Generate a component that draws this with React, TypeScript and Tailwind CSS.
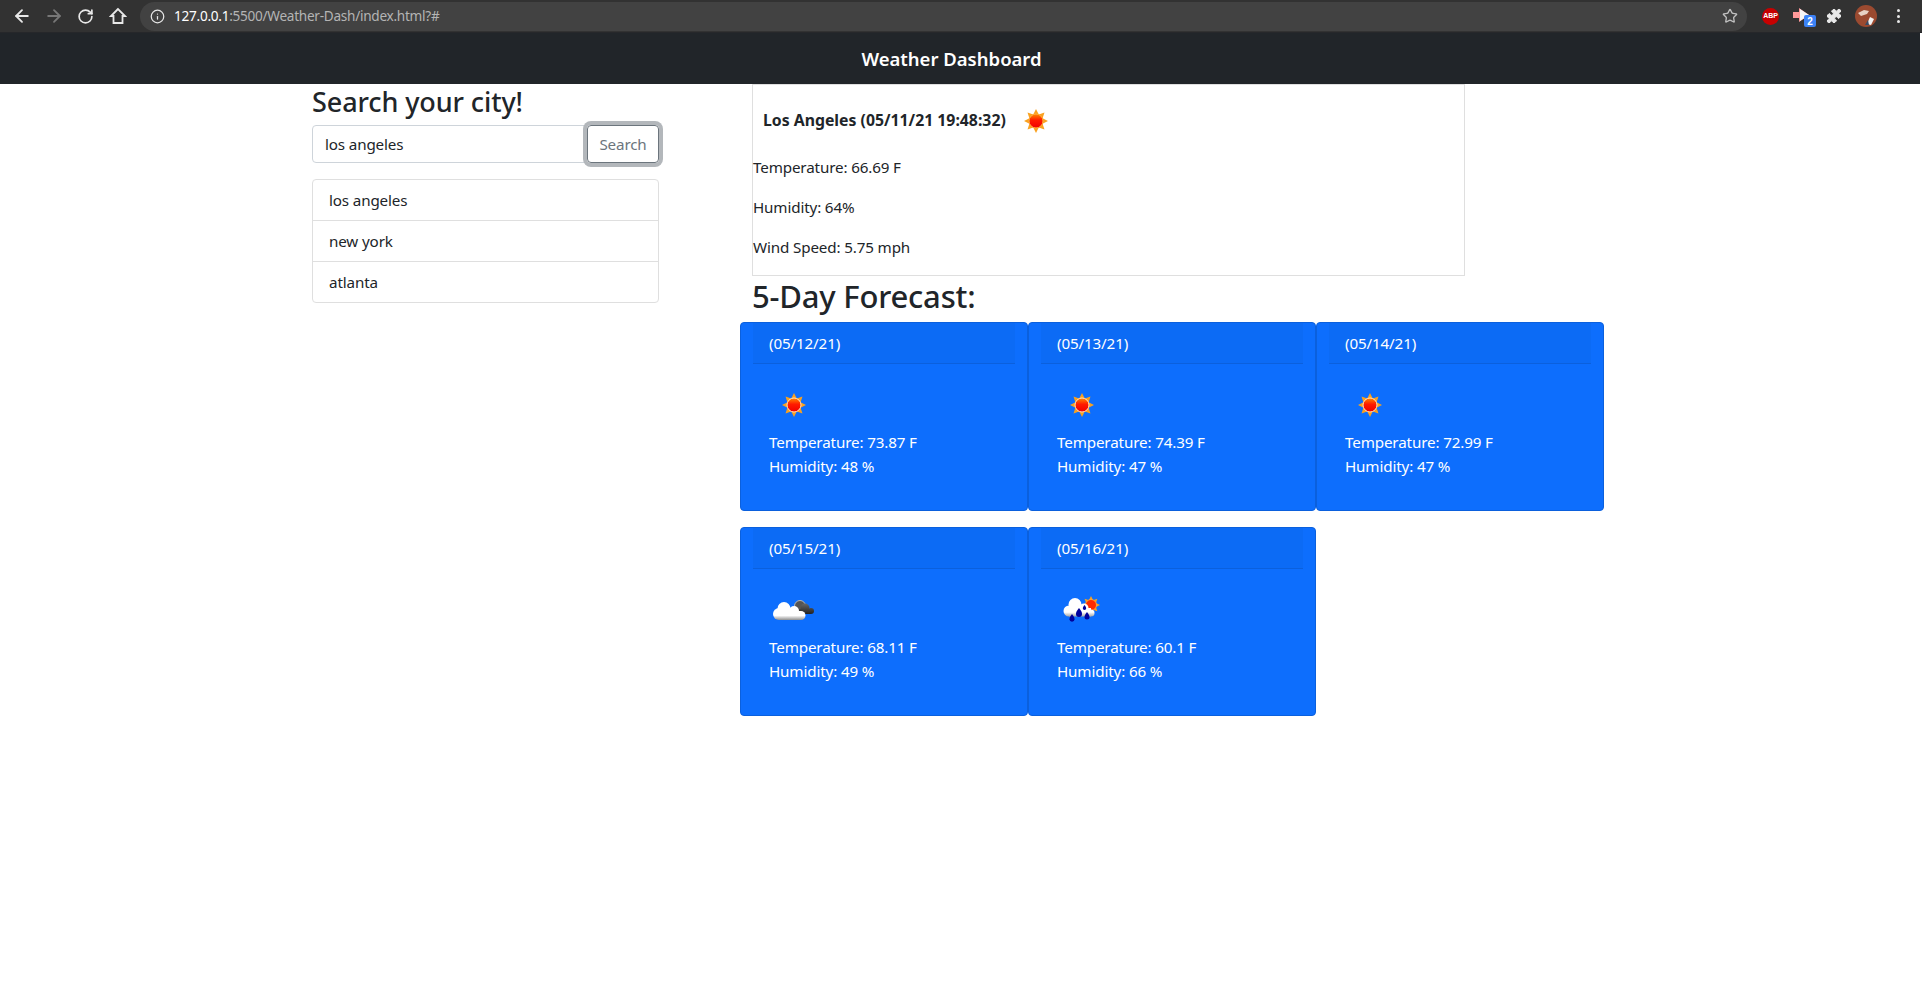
import { ArrowLeft, ArrowRight, RotateCw, Info, Star, Puzzle } from 'lucide-react';

interface Forecast {
  date: string;
  temp: string;
  humidity: number;
  icon: 'sun' | 'cloud' | 'rain';
}

const forecasts: Forecast[] = [
  { date: '(05/12/21)', temp: '73.87', humidity: 48, icon: 'sun' },
  { date: '(05/13/21)', temp: '74.39', humidity: 47, icon: 'sun' },
  { date: '(05/14/21)', temp: '72.99', humidity: 47, icon: 'sun' },
  { date: '(05/15/21)', temp: '68.11', humidity: 49, icon: 'cloud' },
  { date: '(05/16/21)', temp: '60.1', humidity: 66, icon: 'rain' },
];

const cities = ['los angeles', 'new york', 'atlanta'];
const rays = [0, 45, 90, 135, 180, 225, 270, 315];

const SunIcon = ({ ring = false }: { ring?: boolean }) => (
  <svg width="24" height="24" viewBox="0 0 24 24">
    <defs>
      <linearGradient id="sunFill" x1="0" y1="0" x2="0" y2="1">
        <stop offset="0" stopColor="#ff8a00" />
        <stop offset="0.45" stopColor="#ff1a00" />
        <stop offset="1" stopColor="#f00000" />
      </linearGradient>
    </defs>
    {rays.map((r) => (
      <path key={r} d="M12 0l3 6H9z" fill="#f9a11f" transform={`rotate(${r} 12 12)`} />
    ))}
    <circle cx="12" cy="12" r="7" fill="url(#sunFill)" stroke={ring ? '#ffe3c4' : '#ffb040'} strokeWidth="1" />
  </svg>
);

const CloudIcon = () => (
  <svg width="44" height="22" viewBox="0 0 44 22">
    <defs>
      <linearGradient id="darkCloud" gradientUnits="userSpaceOnUse" x1="0" y1="2" x2="0" y2="15">
        <stop offset="0" stopColor="#777" />
        <stop offset="1" stopColor="#222" />
      </linearGradient>
      <linearGradient id="whiteCloud" gradientUnits="userSpaceOnUse" x1="0" y1="3" x2="0" y2="21">
        <stop offset="0" stopColor="#fff" />
        <stop offset="0.75" stopColor="#fff" />
        <stop offset="1" stopColor="#8f8f8f" />
      </linearGradient>
    </defs>
    <circle cx="28" cy="7" r="5.500" fill="#555" stroke="#b5b5b5" strokeWidth="1" />
    <g fill="url(#darkCloud)">
      <circle cx="33" cy="9" r="4.500" />
      <circle cx="39" cy="12" r="3" />
      <rect x="27" y="10" width="12" height="5" />
    </g>
    <g fill="url(#whiteCloud)">
      <circle cx="7" cy="15" r="6" />
      <circle cx="12" cy="9.500" r="6.500" />
      <circle cx="22" cy="12" r="5" />
      <circle cx="29" cy="16.500" r="4.500" />
      <rect x="7" y="12" width="22" height="9" />
    </g>
  </svg>
);

const RainIcon = () => (
  <svg width="38" height="28" viewBox="0 0 38 28">
    <defs>
      <linearGradient id="rainCloud" gradientUnits="userSpaceOnUse" x1="0" y1="2" x2="0" y2="21">
        <stop offset="0" stopColor="#fff" />
        <stop offset="0.75" stopColor="#fff" />
        <stop offset="1" stopColor="#9a9a9a" />
      </linearGradient>
    </defs>
    {rays.map((r) => (
      <path key={r} d="M28 0l2.500 5h-5z" fill="#f9a11f" transform={`rotate(${r} 28 9)`} />
    ))}
    <circle cx="28" cy="9" r="5.500" fill="#ff2a00" stroke="#ffb040" strokeWidth="0.800" />
    <g fill="url(#rainCloud)">
      <circle cx="6" cy="15" r="5.500" />
      <circle cx="12" cy="8.500" r="6.500" />
      <circle cx="21" cy="12" r="4.500" />
      <circle cx="28" cy="17" r="3.500" />
      <rect x="6" y="12" width="22" height="8.500" />
    </g>
    <path d="M9 18c2 2.500 2.500 4 2.500 5.200a2.500 2.500 0 0 1-5 0c0-1.200.5-2.700 2.500-5.200z" fill="#00009c" />
    <path d="M16 12c2.500 3 3 4.500 3 6a3 3 0 0 1-6 0c0-1.500.5-3 3-6z" fill="#00009c" />
    <path d="M24 16c2 2.500 2.500 4 2.500 5a2.500 2.500 0 0 1-5 0c0-1 .5-2.500 2.500-5z" fill="#00009c" />
    <path d="M21.500 9c1.200 1.500 1.700 2.500 1.700 3.300a1.700 1.700 0 0 1-3.400 0c0-.8.5-1.800 1.700-3.300z" fill="#00009c" />
  </svg>
);

const ForecastCard = ({ date, temp, humidity, icon }: Forecast) => (
  <div className="h-[189px] w-[288px] rounded-[4px] border border-[#0b60dd] bg-[#0d6efd] text-white">
    <div className="mx-3 h-[41px] border-b border-[#0b60dd] bg-[#0c6bf5] pl-4 pt-[9px]">{date}</div>
    <div className="pl-7 pt-[21px]">
      <div className="flex h-[40px] w-[50px] items-center justify-center">
        {icon === 'sun' && <SunIcon ring />}
        {icon === 'cloud' && <CloudIcon />}
        {icon === 'rain' && <RainIcon />}
      </div>
      <p className="mt-[5px] leading-6">Temperature: {temp} F</p>
      <p className="leading-6">Humidity: {humidity} %</p>
    </div>
  </div>
);

const BrowserBar = () => (
  <div className="flex h-[33px] items-center border-b border-[#26272a] bg-[#323232] text-white">
    <div className="flex w-[140px] items-center gap-[12px] pl-[12px]">
      <ArrowLeft size={20} strokeWidth={2.2} className="text-[#e8e8e8]" />
      <ArrowRight size={20} strokeWidth={2.2} className="text-[#777]" />
      <RotateCw size={17} strokeWidth={2.4} className="ml-[1px] text-[#e8e8e8]" />
      <svg width="18" height="18" viewBox="0 0 18 18" className="ml-[3px]">
        <path d="M9 2L2 9h2.500v7h9V9H16z" fill="none" stroke="#e8e8e8" strokeWidth="1.800" />
      </svg>
    </div>
    <div className="flex h-[29px] w-[1607px] items-center rounded-full bg-[#424242] pl-[10px]">
      <Info size={15} strokeWidth={2} className="text-[#e8e8e8]" />
      <span className="ml-[9px] text-[13.600px] tracking-[-0.27px]">
        <span className="text-white">127.0.0.1</span>
        <span className="text-[#b4b4b4]">:5500/Weather-Dash/index.html?#</span>
      </span>
      <Star size={16} strokeWidth={2} className="ml-auto mr-[9px] text-[#c0c0c0]" />
    </div>
    <div className="flex flex-1 items-center pl-[15px]">
      <div className="flex h-[17px] w-[17px] items-center justify-center rounded-full bg-[#c70000] font-['Liberation_Sans',sans-serif] text-[7px] font-bold text-white">
        ABP
      </div>
      <div className="relative ml-[14px] h-[18px] w-[20px]">
        <svg width="18" height="14" viewBox="0 0 18 14" className="mt-[1px]">
          <path d="M0 4h6V0l10 7-10 7v-4H0z" fill="#ff9a9a" />
          <path d="M7 1l9 6-9 6z" fill="#f5f5f5" />
        </svg>
        <span className="absolute right-[-3px] top-[8px] flex h-[12px] w-[12px] items-center justify-center rounded-[2px] bg-[#3b82f6] font-['Liberation_Sans',sans-serif] text-[10px] font-bold text-white">
          2
        </span>
      </div>
      <Puzzle size={16} fill="#e8e8e8" strokeWidth={1.5} className="ml-[13px] text-[#e8e8e8]" />
      <svg width="22" height="22" viewBox="0 0 22 22" className="ml-[13px]">
        <circle cx="11" cy="11" r="11" fill="#9b4a30" />
        <path d="M3 8l6-3 5 1-2 3-6 2z" fill="#e8d2c4" />
        <path d="M12 19l3-7 4 2-3 6z" fill="#f3f3f3" />
        <path d="M10 20l3-5 1 5z" fill="#394b63" />
      </svg>
      <div className="ml-[20px] flex flex-col gap-[2.500px]">
        <span className="h-[3px] w-[3px] rounded-full bg-[#e8e8e8]" />
        <span className="h-[3px] w-[3px] rounded-full bg-[#e8e8e8]" />
        <span className="h-[3px] w-[3px] rounded-full bg-[#e8e8e8]" />
      </div>
    </div>
  </div>
);

export default function App() {
  return (
    <div className="min-h-[996px] bg-white font-['Noto_Sans',sans-serif] text-[15.200px] tracking-[-0.14px] text-[#212529]">
      <BrowserBar />
      <nav className="flex h-[51px] w-[1920px] items-center justify-center bg-[#212529] pr-[17px] pt-[1px] text-[18.500px] font-semibold tracking-normal text-white">
        Weather Dashboard
      </nav>
      <main className="flex pl-[312px]">
        <section className="w-[347px]">
          <h2 className="text-[27px] font-medium leading-[36px] tracking-[-0.1px]">Search your city!</h2>
          <div className="mt-[5px] flex">
            <input
              readOnly
              value="los angeles"
              className="h-[38px] w-[275px] rounded-l-[4px] border border-[#ced4da] px-3 text-[#212529] outline-none"
            />
            <button className="z-10 h-[38px] w-[72px] rounded-[4px] border border-[#6c757d] text-[#6c757d] ring-4 ring-[#b3b7bb]">
              Search
            </button>
          </div>
          <ul className="mt-4 rounded-[4px] border border-[#dfdfdf]">
            {cities.map((city, i) => (
              <li
                key={city}
                className={i > 0 ? 'h-[41px] border-t border-[#dfdfdf] pl-4 leading-[40px]' : 'h-[40px] pl-4 leading-[40px]'}
              >
                {city}
              </li>
            ))}
          </ul>
        </section>
        <section className="ml-[81px]">
          <div className="ml-[12px] h-[192px] w-[713px] border border-[#dfdfdf]">
            <div className="flex h-[69px] items-center pl-[10px] pt-[3px] text-[15.800px] font-bold tracking-normal">
              <span>Los Angeles (05/11/21 19:48:32)</span>
              <span className="ml-[18px]">
                <SunIcon />
              </span>
            </div>
            <p className="mt-[1px] leading-[24px]">Temperature: 66.69 F</p>
            <p className="mt-[16px] leading-[24px]">Humidity: 64%</p>
            <p className="mt-[16px] leading-[24px]">Wind Speed: 5.75 mph</p>
          </div>
          <h2 className="ml-[12px] mt-[-2px] text-[31px] font-medium leading-[44px] tracking-[-0.2px]">5-Day Forecast:</h2>
          <div className="mt-[4px] flex w-[864px] flex-wrap gap-y-4">
            {forecasts.map((f) => (
              <ForecastCard key={f.date} {...f} />
            ))}
          </div>
        </section>
      </main>
    </div>
  );
}
